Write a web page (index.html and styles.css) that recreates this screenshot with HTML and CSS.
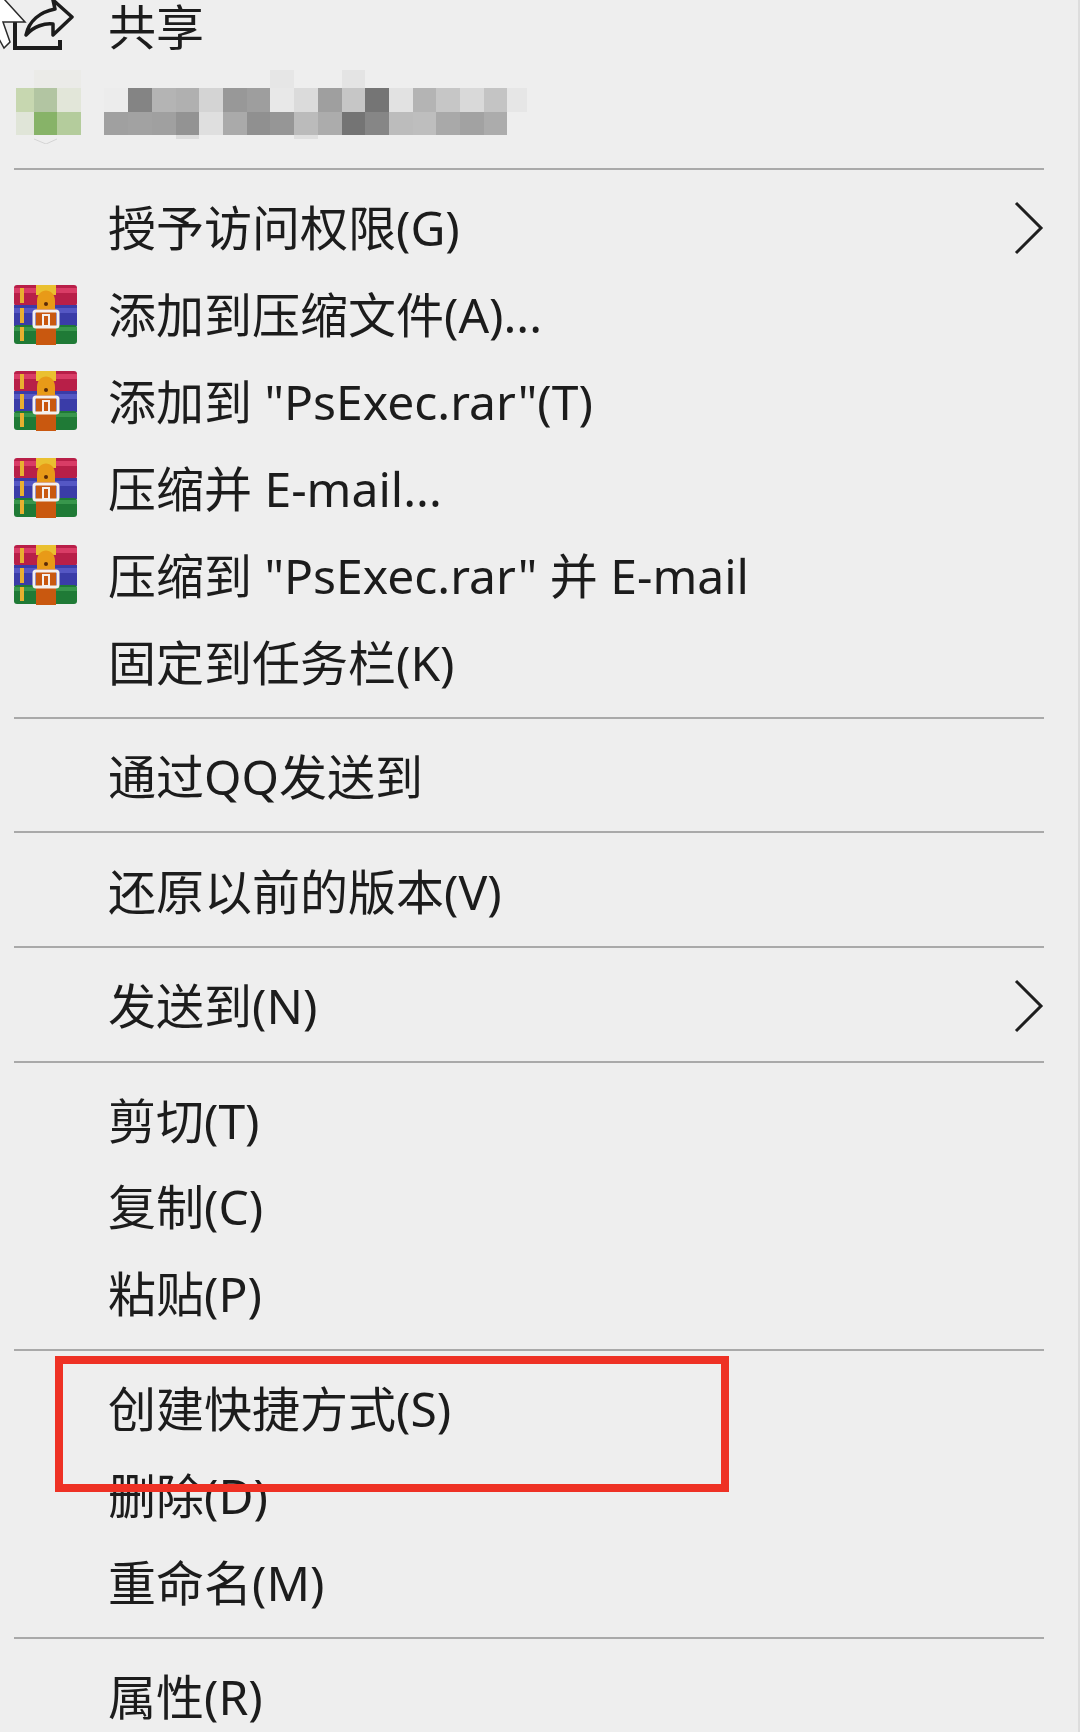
FILE: index.html
```html
<!DOCTYPE html>
<html lang="zh-CN">
<head>
  <meta charset="UTF-8" />
  <meta name="viewport" content="width=device-width, initial-scale=1.0"/>
  <title>右键菜单</title>
  <link rel="stylesheet" href="styles.css">
</head>
<body>

  <svg class="defs" width="0" height="0">
    <symbol id="rar" viewBox="0 0 63 60">
      <rect x="0" y="0" width="63" height="21" rx="3" fill="#b81f48"/>
      <rect x="0" y="3" width="63" height="5" fill="#d93c66"/>
      <rect x="0" y="20" width="63" height="21" fill="#3a3ca8"/>
      <rect x="0" y="23" width="63" height="5" fill="#5557c4"/>
      <rect x="0" y="40" width="63" height="19" rx="3" fill="#1f7a36"/>
      <rect x="0" y="42" width="63" height="4" fill="#38964c"/>
      <rect x="6" y="3" width="4" height="15" fill="#e8b030"/>
      <rect x="6" y="23" width="4" height="15" fill="#e8b030"/>
      <rect x="6" y="42" width="4" height="14" fill="#e8b030"/>
      <rect x="22" y="0" width="20" height="10" fill="#eac030"/>
      <path d="M23 16c0-14 18-14 18 0v8H23z" fill="#e89a18"/>
      <circle cx="32" cy="19" r="2" fill="#5a2a08"/>
      <rect x="22" y="24" width="20" height="36" fill="#c9580f"/>
      <rect x="20" y="26" width="24" height="16" rx="2" fill="none" stroke="#f4f0ee" stroke-width="3"/>
      <rect x="29" y="30" width="6" height="11" fill="none" stroke="#f4f0ee" stroke-width="2"/>
    </symbol>
    <symbol id="chev" viewBox="0 0 30 54">
      <path d="M2 2l25 25L2 52" fill="none" stroke="#1e1e1e" stroke-width="3"/>
    </symbol>
  </svg>

  <div class="menu">
    <div class="item">
      <span class="ico">
        <svg class="share" width="76" height="56" viewBox="0 0 76 56">
          <path d="M15 22v26h45v-8" fill="none" stroke="#1c1c1c" stroke-width="4"/>
          <path d="M26 35c3-14 14-23 29-26L53 0l19 17-19 18V24c-8-1-19 2-27 11z" fill="none" stroke="#1c1c1c" stroke-width="3.5" stroke-linejoin="round"/>
        </svg>
      </span>
      <span>共享</span>
    </div>

    <div class="item">
      <svg class="mosaic" width="530" height="74" viewBox="16 71 530 74">
        <g fill="#ebebe8"><rect x="34" y="71" width="47" height="18"/></g>
        <rect x="270" y="71" width="24" height="18" fill="#e6e6e6"/>
        <rect x="342" y="71" width="23" height="18" fill="#e4e4e4"/>
        <rect x="176" y="136" width="23" height="4" fill="#dcdcdc"/>
        <rect x="294" y="136" width="24" height="4" fill="#dfdfdf"/>
        <path d="M34 140l12 5 11-5" fill="none" stroke="#d4d4d4" stroke-width="1"/>

        <rect x="16" y="89" width="18" height="24" fill="#c7d7b0"/>
        <rect x="34" y="89" width="23" height="24" fill="#b2c5a2"/>
        <rect x="57" y="89" width="24" height="24" fill="#e2e6d9"/>
        <rect x="104" y="89" width="24" height="24" fill="#ececec"/>
        <rect x="128" y="89" width="24" height="24" fill="#848484"/>
        <rect x="152" y="89" width="24" height="24" fill="#b4b4b4"/>
        <rect x="176" y="89" width="23" height="24" fill="#b0b0b0"/>
        <rect x="199" y="89" width="24" height="24" fill="#d4d4d4"/>
        <rect x="223" y="89" width="24" height="24" fill="#989898"/>
        <rect x="247" y="89" width="23" height="24" fill="#9e9e9e"/>
        <rect x="270" y="89" width="24" height="24" fill="#e8e8e8"/>
        <rect x="294" y="89" width="24" height="24" fill="#dbdbdb"/>
        <rect x="318" y="89" width="24" height="24" fill="#9f9f9f"/>
        <rect x="342" y="89" width="23" height="24" fill="#c6c6c6"/>
        <rect x="365" y="89" width="24" height="24" fill="#757575"/>
        <rect x="389" y="89" width="24" height="24" fill="#e2e2e2"/>
        <rect x="413" y="89" width="23" height="24" fill="#b4b4b4"/>
        <rect x="436" y="89" width="24" height="24" fill="#c6c6c6"/>
        <rect x="460" y="89" width="24" height="24" fill="#d9d9d9"/>
        <rect x="484" y="89" width="23" height="24" fill="#c4c4c4"/>
        <rect x="507" y="89" width="20" height="24" fill="#e6e6e6"/>

        <rect x="16" y="113" width="18" height="23" fill="#e0e5d8"/>
        <rect x="34" y="113" width="23" height="23" fill="#87b368"/>
        <rect x="57" y="113" width="24" height="23" fill="#b4cc9c"/>
        <rect x="104" y="113" width="24" height="23" fill="#a0a0a0"/>
        <rect x="128" y="113" width="24" height="23" fill="#a2a2a2"/>
        <rect x="152" y="113" width="24" height="23" fill="#a0a0a0"/>
        <rect x="176" y="113" width="23" height="23" fill="#939393"/>
        <rect x="199" y="113" width="24" height="23" fill="#dfdfdf"/>
        <rect x="223" y="113" width="24" height="23" fill="#aaaaaa"/>
        <rect x="247" y="113" width="23" height="23" fill="#909090"/>
        <rect x="270" y="113" width="24" height="23" fill="#969696"/>
        <rect x="294" y="113" width="24" height="23" fill="#bbbbbb"/>
        <rect x="318" y="113" width="24" height="23" fill="#acacac"/>
        <rect x="342" y="113" width="23" height="23" fill="#747474"/>
        <rect x="365" y="113" width="24" height="23" fill="#868686"/>
        <rect x="389" y="113" width="24" height="23" fill="#bcbcbc"/>
        <rect x="413" y="113" width="23" height="23" fill="#bebebe"/>
        <rect x="436" y="113" width="24" height="23" fill="#a9a9a9"/>
        <rect x="460" y="113" width="24" height="23" fill="#a2a2a2"/>
        <rect x="484" y="113" width="23" height="23" fill="#acacac"/>
      </svg>
    </div>

    <div class="sep"></div>

    <div class="item"><span class="ico"></span><span>授予访问权限(G)</span><svg class="chev"><use href="#chev"/></svg></div>
    <div class="item"><span class="ico"><svg class="rar"><use href="#rar"/></svg></span><span>添加到压缩文件(A)...</span></div>
    <div class="item"><span class="ico"><svg class="rar"><use href="#rar"/></svg></span><span>添加到 "PsExec.rar"(T)</span></div>
    <div class="item"><span class="ico"><svg class="rar"><use href="#rar"/></svg></span><span>压缩并 E-mail...</span></div>
    <div class="item"><span class="ico"><svg class="rar"><use href="#rar"/></svg></span><span>压缩到 "PsExec.rar" 并 E-mail</span></div>
    <div class="item"><span class="ico"></span><span>固定到任务栏(K)</span></div>

    <div class="sep"></div>
    <div class="item"><span class="ico"></span><span>通过QQ发送到</span></div>

    <div class="sep"></div>
    <div class="item"><span class="ico"></span><span>还原以前的版本(V)</span></div>

    <div class="sep"></div>
    <div class="item"><span class="ico"></span><span>发送到(N)</span><svg class="chev"><use href="#chev"/></svg></div>

    <div class="sep"></div>
    <div class="item"><span class="ico"></span><span>剪切(T)</span></div>
    <div class="item"><span class="ico"></span><span>复制(C)</span></div>
    <div class="item"><span class="ico"></span><span>粘贴(P)</span></div>

    <div class="sep"></div>
    <div class="item"><span class="ico"></span><span>创建快捷方式(S)</span></div>
    <div class="item"><span class="ico"></span><span>删除(D)</span></div>
    <div class="item"><span class="ico"></span><span>重命名(M)</span></div>

    <div class="sep"></div>
    <div class="item"><span class="ico"></span><span>属性(R)</span></div>
  </div>

  <svg class="cursor" width="30" height="50" viewBox="0 0 30 50">
    <path d="M-6 -12L25 22H15L9 22L3 22L10 42L4 48L-6 30z" fill="#fff" stroke="#2a2a2a" stroke-width="1.5"/>
  </svg>

  <div class="highlight"></div>

</body>
</html>
```

FILE: styles.css
```css
html, body {
  margin: 0;
  padding: 0;
  height: 1732px;
  overflow: hidden;
}

body {
  position: relative;
  background-color: #eeeeee;
  border-right: 2px solid #dddddd;
  box-sizing: border-box;
  font-family: "Noto Sans", "Noto Sans CJK SC", sans-serif;
  font-weight: 400;
  font-size: 48px;
  line-height: 1;
  color: #1c1c1c;
}

.defs {
  position: absolute;
}

.menu {
  margin-top: -16.5px;
  filter: blur(0.6px);
}

.item {
  display: flex;
  align-items: center;
  height: 86.85px;
  white-space: nowrap;
}

.ico {
  flex: 0 0 108px;
  display: flex;
  align-items: center;
}

.share {
  margin-top: 2px;
}

.rar {
  width: 63px;
  height: 60px;
  margin-left: 14px;
  margin-top: -1px;
}

.mosaic {
  align-self: flex-start;
  margin-left: 16px;
}

.chev {
  width: 30px;
  height: 54px;
  position: absolute;
  left: 1014px;
  margin-top: -1px;
}

.sep {
  height: 2px;
  margin: 11px 34px 14.7px 14px;
  background: #a9a9a9;
}

.cursor {
  position: absolute;
  left: 0;
  top: 0;
}

.highlight {
  position: absolute;
  left: 55px;
  top: 1356px;
  width: 674px;
  height: 136px;
  box-sizing: border-box;
  border: 8px solid #ee3124;
}
```
